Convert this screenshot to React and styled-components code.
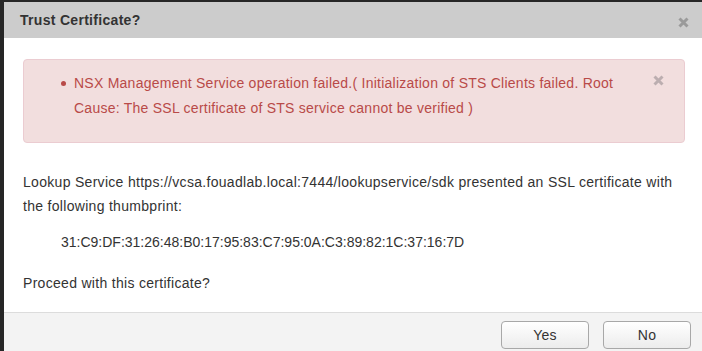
import React from 'react';
import styled, { createGlobalStyle } from 'styled-components';

const GlobalStyle = createGlobalStyle`
  html, body {
    margin: 0;
    padding: 0;
    width: 702px;
    height: 351px;
    overflow: hidden;
    background: #262626;
  }
  * {
    box-sizing: border-box;
  }
`;

const Dialog = styled.div`
  margin: 2px 0 0 4px;
  width: 699px;
  height: 349px;
  background: #fff;
  display: flex;
  flex-direction: column;
  font-family: 'Liberation Sans', Arial, sans-serif;
  color: #333;
`;

const Header = styled.div`
  height: 36px;
  background: #cccccc;
  display: flex;
  align-items: center;
  justify-content: space-between;
  padding: 0 14px 0 16px;
`;

const Title = styled.h3`
  margin: 0;
  font-size: 14px;
  font-weight: bold;
  letter-spacing: 0.3px;
  color: #333;
`;

const CloseBtn = styled.svg`
  width: 11px;
  height: 11px;
  flex-shrink: 0;
  margin-top: ${({ $top }) => $top || 0}px;
  stroke: ${({ $muted }) => ($muted ? '#bcaeb0' : '#9a9a9a')};
  stroke-width: 3;
  cursor: pointer;
`;

const CloseIcon = (props) => (
  <CloseBtn viewBox="0 0 11 11" {...props}>
    <path d="M1.5 1.5 L9.5 9.5 M9.5 1.5 L1.5 9.5" />
  </CloseBtn>
);

const Body = styled.div`
  flex: 1;
  padding: 21px 18px 0 19px;
  font-size: 14px;
  line-height: 24px;
  letter-spacing: 0.3px;
`;

const Alert = styled.div`
  display: flex;
  justify-content: space-between;
  align-items: flex-start;
  background: #f2dede;
  border: 1px solid #ebccd1;
  border-radius: 4px;
  padding: 11px 20px 21px 37px;
  color: #b94a48;
  letter-spacing: 0.25px;
`;

const ErrorList = styled.ul`
  margin: 0;
  padding: 0;
  list-style: none;
  width: 570px;
  line-height: 25px;

  li {
    position: relative;
    padding-left: 13px;

    &:before {
      content: '';
      position: absolute;
      left: 0;
      top: 10px;
      width: 5px;
      height: 5px;
      border-radius: 50%;
      background: #b94a48;
    }
  }
`;

const Para = styled.p`
  margin: ${({ $top }) => $top}px 0 0;
  padding-left: ${({ $indent }) => $indent || 0}px;
  letter-spacing: ${({ $mono }) => ($mono ? '0' : 'inherit')};
`;

const Footer = styled.div`
  height: 39px;
  border-top: 1px solid #dcdcdc;
  background: #f3f3f3;
  display: flex;
  justify-content: flex-end;
  align-items: flex-start;
  gap: 14px;
  padding: 8px 12px 0 0;
`;

const Button = styled.button`
  width: 88px;
  height: 28px;
  border: 1px solid #a8a8a8;
  border-radius: 4px;
  background: linear-gradient(#ffffff, #ececec);
  font-family: 'Liberation Sans', Arial, sans-serif;
  font-size: 14px;
  letter-spacing: 0.3px;
  color: #333;
  cursor: pointer;
`;

const App = () => {
  const errors = [
    'NSX Management Service operation failed.( Initialization of STS Clients failed. Root Cause: The SSL certificate of STS service cannot be verified )',
  ];

  return (
    <>
      <GlobalStyle />
      <Dialog>
        <Header>
          <Title>Trust Certificate?</Title>
          <CloseIcon $top={5} />
        </Header>

        <Body>
          <Alert>
            <ErrorList>
              {errors.map((err, i) => (
                <li key={i}>{err}</li>
              ))}
            </ErrorList>
            <CloseIcon $muted $top={4} />
          </Alert>

          <Para $top={27}>
            Lookup Service https://vcsa.fouadlab.local:7444/lookupservice/sdk presented an SSL
            certificate with the following thumbprint:
          </Para>
          <Para $top={12} $indent={38} $mono>
            31:C9:DF:31:26:48:B0:17:95:83:C7:95:0A:C3:89:82:1C:37:16:7D
          </Para>
          <Para $top={17}>Proceed with this certificate?</Para>
        </Body>

        <Footer>
          <Button>Yes</Button>
          <Button>No</Button>
        </Footer>
      </Dialog>
    </>
  );
};

export default App;
